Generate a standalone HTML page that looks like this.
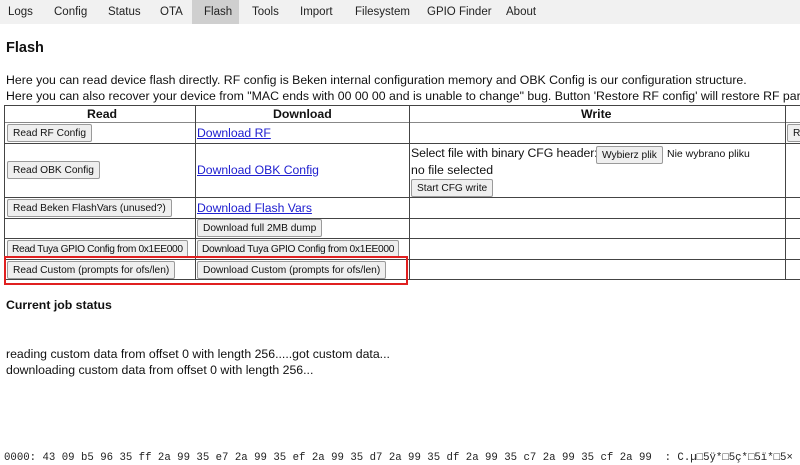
<!DOCTYPE html>
<html><head><meta charset="utf-8"><style>
*{margin:0;padding:0;box-sizing:border-box}
body{width:800px;height:465px;overflow:hidden;background:#fff;font-family:"Liberation Sans",sans-serif;color:#111;position:relative}
.a{position:absolute;white-space:nowrap}
.nav{position:absolute;left:0;top:0;width:800px;height:24px;background:#f1f1f1}
.nav span{position:absolute;top:6px;font-size:11.5px;color:#222}
.act{position:absolute;left:192px;top:0;width:47px;height:24px;background:#cfcfcf}
.t{font-size:12.3px}
.hl{position:absolute;background:#444;height:1px}
.vl{position:absolute;background:#444;width:1px}
.btn{position:absolute;height:18px;border:1px solid #9a9a9a;border-radius:2px;background:#efefef;font-size:10.2px;line-height:17px;padding:0 5px;white-space:nowrap;color:#111}
.lnk{position:absolute;font-size:12.2px;color:#2020d0;text-decoration:underline;white-space:nowrap}
.b{font-weight:bold}
</style></head><body>
<div class="nav"><div class="act"></div>
<span style="left:8px">Logs</span><span style="left:54px">Config</span><span style="left:108px">Status</span><span style="left:160px">OTA</span><span style="left:204px">Flash</span><span style="left:252px">Tools</span><span style="left:300px">Import</span><span style="left:355px">Filesystem</span><span style="left:427px">GPIO Finder</span><span style="left:506px">About</span></div>
<div class="a b" style="left:6px;top:40px;font-size:14.5px">Flash</div>
<div class="a t" style="left:6px;top:73px">Here you can read device flash directly. RF config is Beken internal configuration memory and OBK Config is our configuration structure.</div>
<div class="a t" style="left:6px;top:89px">Here you can also recover your device from "MAC ends with 00 00 00 and is unable to change" bug. Button 'Restore RF config' will restore RF partition</div>
<div class="hl" style="left:4px;top:105px;width:796px"></div>
<div class="hl" style="left:4px;top:122px;width:796px;background:#888"></div>
<div class="hl" style="left:4px;top:143px;width:796px"></div>
<div class="hl" style="left:4px;top:197px;width:796px"></div>
<div class="hl" style="left:4px;top:218px;width:796px"></div>
<div class="hl" style="left:4px;top:238px;width:796px"></div>
<div class="hl" style="left:4px;top:259px;width:796px"></div>
<div class="hl" style="left:4px;top:279px;width:796px"></div>
<div class="vl" style="left:4px;top:105px;height:175px"></div>
<div class="vl" style="left:195px;top:105px;height:175px"></div>
<div class="vl" style="left:409px;top:105px;height:175px"></div>
<div class="vl" style="left:785px;top:105px;height:175px"></div>
<div class="a b t" style="left:87px;top:107px">Read</div>
<div class="a b t" style="left:273px;top:107px">Download</div>
<div class="a b t" style="left:581px;top:107px">Write</div>
<div class="btn" style="left:7px;top:124px">Read RF Config</div>
<div class="lnk" style="left:197px;top:126px">Download RF</div>
<div class="btn" style="left:787px;top:124px;width:20px">Re</div>
<div class="btn" style="left:7px;top:161px">Read OBK Config</div>
<div class="lnk" style="left:197px;top:163px">Download OBK Config</div>
<div class="a t" style="left:411px;top:146px;letter-spacing:-0.1px">Select file with binary CFG header:</div>
<div class="btn" style="left:596px;top:146px">Wybierz plik</div>
<div class="a" style="left:667px;top:148px;font-size:10.5px">Nie wybrano pliku</div>
<div class="a t" style="left:411px;top:163px">no file selected</div>
<div class="btn" style="left:411px;top:179px">Start CFG write</div>
<div class="btn" style="left:7px;top:199px">Read Beken FlashVars (unused?)</div>
<div class="lnk" style="left:197px;top:201px">Download Flash Vars</div>
<div class="btn" style="left:197px;top:219px">Download full 2MB dump</div>
<div class="btn" style="left:7px;top:240px;letter-spacing:-0.35px;padding:0 4px">Read Tuya GPIO Config from 0x1EE000</div>
<div class="btn" style="left:197px;top:240px;letter-spacing:-0.3px;padding:0 4px">Download Tuya GPIO Config from 0x1EE000</div>
<div class="btn" style="left:7px;top:261px">Read Custom (prompts for ofs/len)</div>
<div class="btn" style="left:197px;top:261px">Download Custom (prompts for ofs/len)</div>
<div class="a" style="left:4px;top:256px;width:404px;height:29px;border:2px solid #e02020"></div>
<div class="a b t" style="left:6px;top:298px">Current job status</div>
<div class="a t" style="left:6px;top:347px">reading custom data from offset 0 with length 256.....got custom data...</div>
<div class="a t" style="left:6px;top:363px">downloading custom data from offset 0 with length 256...</div>
<div class="a" style="left:4px;top:452px;font-family:'Liberation Mono',monospace;font-size:10.7px;color:#222">0000: 43 09 b5 96 35 ff 2a 99 35 e7 2a 99 35 ef 2a 99 35 d7 2a 99 35 df 2a 99 35 c7 2a 99 35 cf 2a 99&nbsp;&nbsp;: C.µ□5ÿ*□5ç*□5ï*□5×</div>
</body></html>
